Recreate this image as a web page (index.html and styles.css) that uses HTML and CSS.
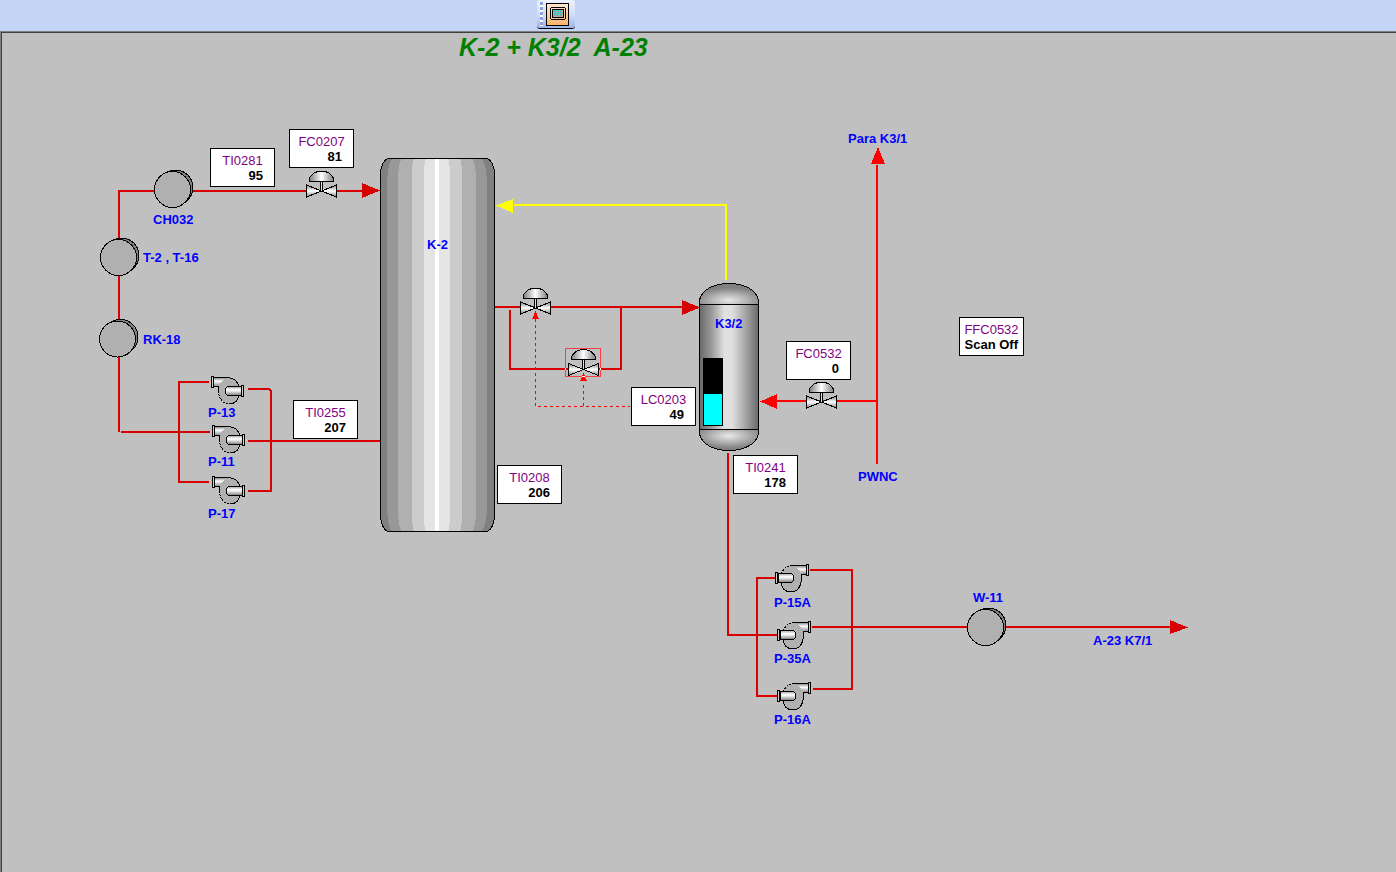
FILE: index.html
```html
<!DOCTYPE html>
<html lang="en">
<head>
<meta charset="utf-8">
<title>K-2 + K3/2 A-23</title>
<link rel="stylesheet" href="styles.css">
</head>
<body>
<header class="toolbar">
  <div class="toolbar-group">
    <span class="grip"></span>
    <button class="tool-button" type="button" aria-label="Display">
      <svg width="16" height="14" viewBox="0 0 16 14" shape-rendering="crispEdges" aria-hidden="true">
        <path d="M1 0H15V1H1ZM1 12H15V13H1ZM0 1H1V12H0ZM15 1H16V12H15Z" fill="#000"/>
        <rect x="2.500" y="2.500" width="11" height="8" fill="#b8b0a8" stroke="#000"/>
        <path d="M4 3.500h8M4 5.500h8M4 7.500h8" stroke="#30d8d8" stroke-dasharray="3 1"/>
        <path d="M4 4.500h8M4 6.500h8M4 8.500h8" stroke="#909090" stroke-dasharray="2 1"/>
      </svg>
    </button>
  </div>
</header>
<main class="display">
  <h1 class="display-title">K-2 + K3/2  A-23</h1>
  <svg class="mimic" width="1230" height="760" viewBox="2 33 1230 760" role="img" aria-label="Process diagram">
    <defs>
      <linearGradient id="metal" x1="0" x2="1" y1="0" y2="0">
        <stop offset="0" stop-color="#808080"/><stop offset=".5" stop-color="#fff"/><stop offset="1" stop-color="#808080"/>
      </linearGradient>
      <linearGradient id="vessel" x1="0" x2="1" y1="0" y2="0">
        <stop offset="0" stop-color="#686868"/><stop offset=".2" stop-color="#989898"/><stop offset=".42" stop-color="#e0e0e0"/><stop offset=".55" stop-color="#e0e0e0"/><stop offset=".8" stop-color="#a0a0a0"/><stop offset="1" stop-color="#686868"/>
      </linearGradient>
      <radialGradient id="headTop" cx=".5" cy=".8" r=".6">
        <stop offset="0" stop-color="#e8e8e8"/><stop offset="1" stop-color="#808080"/>
      </radialGradient>
      <radialGradient id="headBottom" cx=".5" cy=".3" r=".6">
        <stop offset="0" stop-color="#e8e8e8"/><stop offset="1" stop-color="#808080"/>
      </radialGradient>
      <linearGradient id="tube" x1="0" x2="0" y1="0" y2="1">
        <stop offset="0" stop-color="#a0a0a0"/><stop offset=".35" stop-color="#fff"/><stop offset=".5" stop-color="#f0f0f0"/><stop offset="1" stop-color="#787878"/>
      </linearGradient>
      <linearGradient id="throat" x1="0" x2="0" y1="0" y2="1">
        <stop offset="0" stop-color="#909090"/><stop offset=".4" stop-color="#fff"/><stop offset="1" stop-color="#909090"/>
      </linearGradient>
      <linearGradient id="cone" x1="0" x2="0" y1="0" y2="1">
        <stop offset="0" stop-color="#808080"/><stop offset=".5" stop-color="#fff"/><stop offset="1" stop-color="#808080"/>
      </linearGradient>
      <g id="exchanger">
        <circle cx="3" cy="-2" r="17.500" fill="#808080" stroke="#000"/>
        <circle cx="0" cy="0" r="18" fill="#b0b0b0" stroke="#000"/>
      </g>
      <g id="valve" stroke="#000">
        <path d="M-15-6L0 0L-15 6Z" fill="url(#cone)"/>
        <path d="M15-6L0 0L15 6Z" fill="url(#cone)"/>
        <rect x="-1" y="-10" width="2" height="10" fill="#e0e0e0"/>
        <path d="M-12-10V-13C-9-18-4-20 0-20S9-18 12-13V-10Z" fill="url(#metal)"/>
      </g>
      <g id="pump" stroke="#000">
        <path d="M3 1.500H17C23 2 28 7 28 14C28 22 24 28 18 28C12 28 8 23 8 16V10.500H3Z" fill="#b0b0b0" stroke="none"/>
        <path d="M3 2H14L7 10H3Z" fill="url(#throat)" stroke="none"/>
        <path d="M3 1.500H17C23 2 27 6 28 11M3 10.500H7.500V15M28 19C27 25 23 28 18 28" fill="none"/>
        <path d="M7.500 15C8 23 12 28 18 28" fill="none" stroke-dasharray="2 1"/>
        <path d="M30 10.500H16.500L14.500 12.500V17.500L16.500 19.500H30Z" fill="url(#tube)"/>
        <rect x=".5" y=".5" width="2" height="11" fill="#d0d0d0"/>
        <rect x="30.500" y="9.500" width="2" height="11" fill="#d0d0d0"/>
      </g>
      <g id="pumpReverse" stroke="#000">
        <path d="M-3 1.500H-17C-23 2-28 7-28 14C-28 22-24 28-18 28C-12 28-8 23-8 16V10.500H-3Z" fill="#b0b0b0" stroke="none"/>
        <path d="M-3 2H-14L-7 10H-3Z" fill="url(#throat)" stroke="none"/>
        <path d="M-3 1.500H-17M-3 10.500H-7.500V15C-8 23-12 28-18 28C-23 28-27 25-28 19" fill="none"/>
        <path d="M-17 1.500C-23 2-27 6-28 11" fill="none" stroke-dasharray="2 1"/>
        <path d="M-31 9.500H-17.500L-15.500 11.500V16.500L-17.500 18.500H-31Z" fill="url(#tube)"/>
        <rect x="-2.500" y=".5" width="2" height="11" fill="#d0d0d0"/>
        <rect x="-33.500" y="8.500" width="2" height="11" fill="#d0d0d0"/>
      </g>
    </defs>

    <g class="pipe">
      <path d="M364 190.500H119V432"/>
      <path d="M121 432H210M209 382H179V482H209"/>
      <path d="M248 389H269L271 391V491H248M248 441H380"/>
      <path d="M495 307H684M510 310V369H621V307"/>
      <path d="M728 453V635H777M777 578H757V696H777"/>
      <path d="M810 570H852V689H813M812 627H1172"/>
      <path class="pipe-bright" d="M877 165V464M877 401H776"/>
      <path class="pipe-yellow" d="M514 205H726V280"/>
    </g>
    <g class="signal">
      <path d="M535.500 319V406.500H630M583.500 406V382"/>
    </g>
    <g class="arrow">
      <path d="M362 183V198L380 190.500Z"/>
      <path d="M682 300V315L700 307.500Z"/>
      <path d="M1170 620V634L1188 627.500Z"/>
      <path class="arrow-bright" d="M777 394V409L760 401.500Z"/>
      <path class="arrow-bright" d="M871 164H885L878 147Z"/>
      <path class="arrow-bright" d="M532 319H539L535.500 311ZM580 381H587L583.500 373Z"/>
      <path class="arrow-yellow" d="M513 199V213L496 205.500Z"/>
    </g>

    <g class="equipment">
      <use href="#exchanger" x="172.500" y="189.500"/>
      <use href="#exchanger" x="118.500" y="257.500"/>
      <use href="#exchanger" x="117.500" y="339"/>
      <use href="#exchanger" x="985.500" y="627.500"/>

      <path d="M387.500 158.500H487.500Q494.500 162 494.500 176V513Q494.500 528 487.500 531.500H387.500Q380.500 528 380.500 513V176Q380.500 162 387.500 158.500Z" fill="#808080"/>
      <rect x="387" y="159" width="100" height="372" rx="6" ry="26" fill="#989898"/>
      <rect x="398" y="159" width="78" height="372" rx="4" ry="22" fill="#b0b0b0"/>
      <rect x="412" y="159" width="50" height="372" rx="2" ry="18" fill="#ccc"/>
      <rect x="424" y="159" width="26" height="372" rx="2" ry="18" fill="#e4e4e4"/>
      <rect x="435" y="159" width="4" height="372" fill="#fff"/>
      <path d="M387.500 158.500H487.500Q494.500 162 494.500 176V513Q494.500 528 487.500 531.500H387.500Q380.500 528 380.500 513V176Q380.500 162 387.500 158.500Z" fill="none" stroke="#000"/>

      <path d="M699.500 304.500V300C702 289 715 283.500 729 283.500S756 289 758.500 300V304.500Z" fill="url(#headTop)" stroke="#000"/>
      <path d="M699.500 429.500V434C702 445 715 450.500 729 450.500S756 445 758.500 434V429.500Z" fill="url(#headBottom)" stroke="#000"/>
      <rect x="699.500" y="304.500" width="59" height="125" fill="url(#vessel)" stroke="#000"/>
      <rect x="703" y="358" width="20" height="68" fill="#000"/>
      <rect x="704" y="394" width="18" height="31" fill="#0ff"/>

      <rect x="565.500" y="348.500" width="35" height="28" fill="none" stroke="#ff4040"/>
      <use href="#valve" x="321.500" y="191"/>
      <use href="#valve" x="535.500" y="308"/>
      <use href="#valve" x="583.500" y="369.500"/>
      <use href="#valve" x="821.500" y="402"/>
      <path d="M565 368h1v2h-1ZM600 368h1v2h-1ZM582 376h3v1h-3Z" fill="#fff"/>

      <use href="#pump" x="211" y="376"/>
      <use href="#pump" x="212" y="425"/>
      <use href="#pump" x="212" y="476"/>
      <use href="#pumpReverse" x="809" y="564"/>
      <use href="#pumpReverse" x="811" y="621"/>
      <use href="#pumpReverse" x="811" y="682"/>
    </g>

    <g class="label">
      <text x="153" y="224">CH032</text>
      <text x="143" y="262">T-2 , T-16</text>
      <text x="143" y="344">RK-18</text>
      <text x="208" y="417">P-13</text>
      <text x="208" y="466">P-11</text>
      <text x="208" y="518">P-17</text>
      <text x="427" y="249">K-2</text>
      <text x="715" y="328">K3/2</text>
      <text x="848" y="143">Para K3/1</text>
      <text x="858" y="481">PWNC</text>
      <text x="774" y="607">P-15A</text>
      <text x="774" y="663">P-35A</text>
      <text x="774" y="724">P-16A</text>
      <text x="973" y="602">W-11</text>
      <text x="1093" y="645">A-23 K7/1</text>
    </g>
  </svg>

  <div class="tag ti0281"><span class="tag-name">TI0281</span><span class="tag-value">95</span></div>
  <div class="tag fc0207"><span class="tag-name">FC0207</span><span class="tag-value">81</span></div>
  <div class="tag ti0255"><span class="tag-name">TI0255</span><span class="tag-value">207</span></div>
  <div class="tag ti0208"><span class="tag-name">TI0208</span><span class="tag-value">206</span></div>
  <div class="tag lc0203"><span class="tag-name">LC0203</span><span class="tag-value">49</span></div>
  <div class="tag fc0532"><span class="tag-name">FC0532</span><span class="tag-value">0</span></div>
  <div class="tag ti0241"><span class="tag-name">TI0241</span><span class="tag-value">178</span></div>
  <div class="tag ffc0532"><span class="tag-name">FFC0532</span><span class="tag-value tag-status">Scan Off</span></div>
</main>
</body>
</html>
```
FILE: styles.css
```css
* {
  box-sizing: border-box;
}

body {
  margin: 0;
  min-height: 100vh;
  display: flex;
  flex-direction: column;
  background: #c0c0c0;
  font-family: "Liberation Sans", Arial, sans-serif;
  font-size: 13px;
}

.toolbar {
  height: 31px;
  padding-left: 537px;
  background: #c4d4f4;
}

.toolbar-group {
  display: flex;
  align-items: center;
  gap: 3px;
  width: 38px;
  height: 28px;
  padding: 0 3px;
  border-radius: 3px;
  background: linear-gradient(#eef3fd, #d4e0f8 50%, #9cb4e8);
  box-shadow: 0 1px 0 #000;
}

.grip {
  width: 3px;
  height: 24px;
  background: repeating-linear-gradient(#88a4e0 0 3px, #fff 3px 5px);
}

.tool-button {
  display: flex;
  align-items: center;
  justify-content: center;
  flex: none;
  width: 23px;
  height: 23px;
  padding: 0;
  border: 1px solid #000;
  border-radius: 0;
  background: linear-gradient(#fde8d0, #fdb468);
}

.display {
  position: relative;
  flex: 1;
  border-top: 1px solid #404040;
  border-left: 1px solid #404040;
  outline: 1px solid #808080;
  margin: 1px 0 0 1px;
  background: #c0c0c0;
  overflow: hidden;
}

.display-title {
  position: absolute;
  left: 457px;
  top: 0;
  margin: 0;
  color: #008000;
  font-size: 25px;
  font-style: italic;
  font-weight: bold;
  line-height: 28px;
  white-space: pre;
}

.mimic {
  display: block;
}

.pipe {
  fill: none;
  stroke: #d80000;
  stroke-width: 2px;
  shape-rendering: crispEdges;
}

.pipe-bright {
  stroke: #f00;
}

.pipe-yellow {
  stroke: #ff0;
}

.signal {
  fill: none;
  stroke: #f00;
  stroke-dasharray: 3 3;
  shape-rendering: crispEdges;
}

.arrow {
  fill: #d80000;
  shape-rendering: crispEdges;
}

.arrow-bright {
  fill: #f00;
}

.arrow-yellow {
  fill: #ff0;
}

.equipment {
  shape-rendering: crispEdges;
}

.label {
  fill: #00f;
  font-size: 13px;
  font-weight: bold;
}

.tag {
  position: absolute;
  display: flex;
  flex-direction: column;
  width: 65px;
  padding: 4px 0 3px;
  border: 1px solid #000;
  background: #fff;
  line-height: 15px;
  white-space: nowrap;
}

.tag-name {
  color: #800080;
  text-align: center;
}

.tag-value {
  padding-right: 11px;
  color: #000;
  font-weight: bold;
  text-align: right;
}

.tag-status {
  padding-right: 5px;
}

.ti0281 { left: 208px; top: 115px; }
.fc0207 { left: 287px; top: 96px; }
.ti0255 { left: 291px; top: 367px; }
.ti0208 { left: 495px; top: 432px; }
.lc0203 { left: 629px; top: 354px; }
.fc0532 { left: 784px; top: 308px; }
.ti0241 { left: 731px; top: 422px; }
.ffc0532 { left: 957px; top: 284px; }
```
